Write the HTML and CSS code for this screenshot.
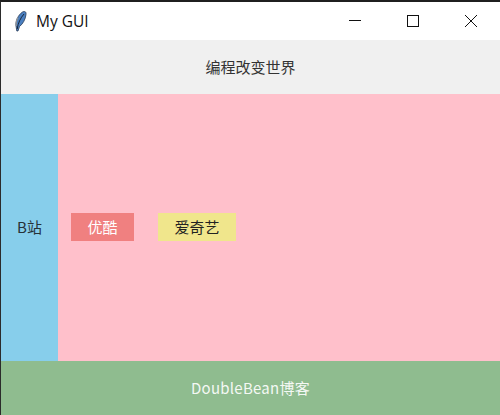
FILE: index.html
```html
<!DOCTYPE html>
<html lang="en">
<head>
  <meta charset="UTF-8">
  <title>My GUI</title>
  <link rel="stylesheet" href="styles.css">
</head>
<body>

  <div class="window">
    <div class="titlebar">
      <svg class="feather" width="12" height="21" viewBox="0 0 12 21">
        <path d="M1 15 C0.5 10 3 4 7.5 1 C9.5 0 11.5 0.5 11 3.5 C10.5 8 8 13 4.5 15.5 L3 20 L1.8 20 Z" fill="#4a7fc0" stroke="#2a3c58" stroke-width="0.8"/>
        <path d="M2.2 18 C3 12 5.5 7 9 3" fill="none" stroke="#16263c" stroke-width="1"/>
        <path d="M1.3 15 C0.9 12 1.6 8.5 3 6.5" fill="none" stroke="#8e9399" stroke-width="1.4"/>
      </svg>
      <span class="title">My GUI</span>
      <div class="controls">
        <svg class="ctrl" width="58" height="38" viewBox="0 0 58 38"><path d="M23 18.5 H35" stroke="#111" fill="none"/></svg>
        <svg class="ctrl" width="58" height="38" viewBox="0 0 58 38"><rect x="23.5" y="13.5" width="11" height="11" stroke="#111" fill="none"/></svg>
        <svg class="ctrl" width="58" height="38" viewBox="0 0 58 38"><path d="M23 13 L35 25 M35 13 L23 25" stroke="#111" fill="none"/></svg>
      </div>
    </div>

    <div class="top">编程改变世界</div>

    <div class="middle">
      <div class="side">B站</div>
      <div class="main">
        <div class="btn youku">优酷</div>
        <div class="btn iqiyi">爱奇艺</div>
      </div>
    </div>

    <div class="bottom">DoubleBean博客</div>
  </div>

</body>
</html>
```

FILE: styles.css
```css
html, body {
  margin: 0;
  padding: 0;
}
body {
  width: 500px;
  height: 415px;
  overflow: hidden;
  font-family: "Noto Sans CJK SC", "Noto Sans", sans-serif;
  font-size: 15px;
}
.window {
  height: 415px;
  display: flex;
  flex-direction: column;
  box-sizing: border-box;
  border-top: 2px solid #1f1f1f;
  border-left: 1px solid #2b2b2b;
  background-color: #f0f0f0;
}
.titlebar {
  height: 38px;
  flex: none;
  display: flex;
  align-items: center;
  background-color: white;
  color: #111;
}
.feather {
  margin-left: 14px;
}
.title {
  margin-left: 9px;
  font-family: "Open Sans", sans-serif;
  font-size: 15.5px;
}
.controls {
  margin-left: auto;
  display: flex;
}
.ctrl {
  display: block;
}
.top {
  height: 54px;
  flex: none;
  box-sizing: border-box;
  padding-bottom: 2px;
  display: flex;
  align-items: center;
  justify-content: center;
  color: #333;
}
.middle {
  flex: 1;
  display: flex;
  background-color: #ffc0cb;
}
.side {
  width: 57px;
  flex: none;
  padding-bottom: 2px;
  display: flex;
  align-items: center;
  justify-content: center;
  background-color: #87ceeb;
  color: #263238;
}
.main {
  flex: 1;
  display: flex;
  align-items: center;
  padding-left: 13px;
  padding-bottom: 1px;
  gap: 24px;
}
.btn {
  height: 28px;
  padding-bottom: 2px;
  box-sizing: border-box;
  display: flex;
  align-items: center;
  justify-content: center;
}
.youku {
  width: 63px;
  background-color: #f08080;
  color: #fff;
}
.iqiyi {
  width: 78px;
  background-color: #f0e68c;
  color: #222;
}
.bottom {
  height: 54px;
  flex: none;
  box-sizing: border-box;
  padding-bottom: 2px;
  display: flex;
  align-items: center;
  justify-content: center;
  background-color: #8fbc8f;
  color: #f4f8f4;
  letter-spacing: 0.25px;
}
```
